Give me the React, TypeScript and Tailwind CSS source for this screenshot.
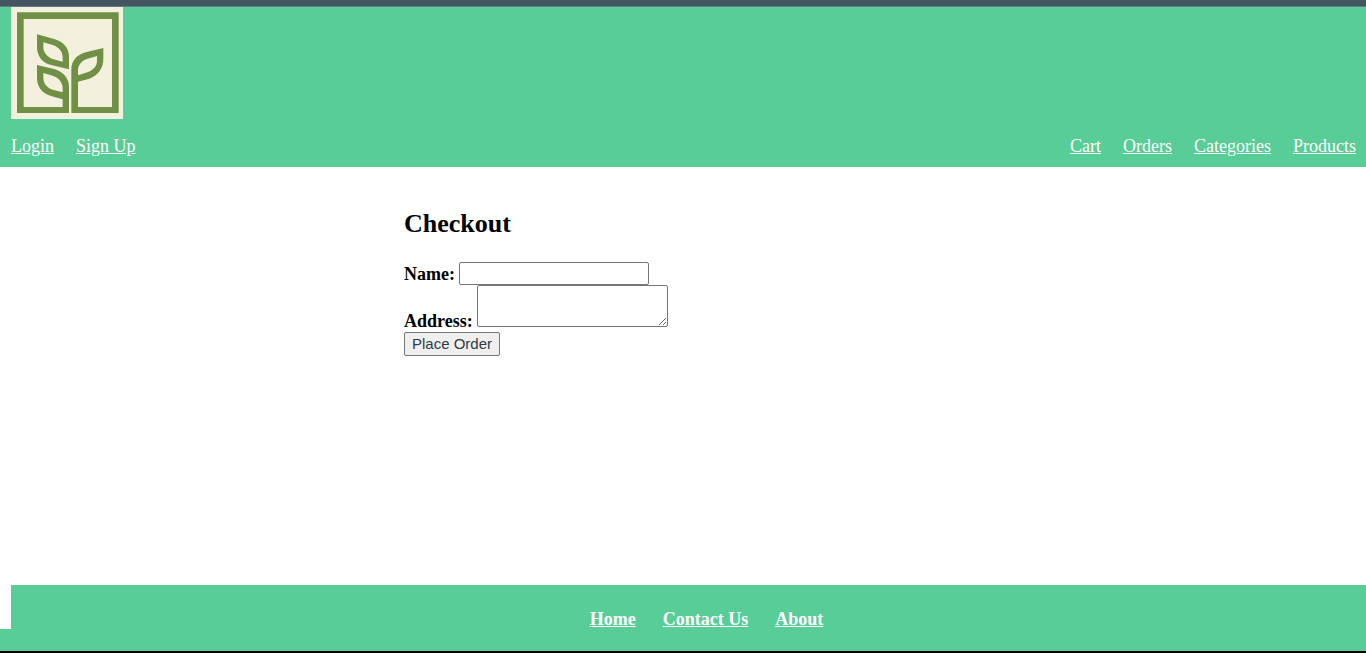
const link = "text-white underline";

function Logo() {
  return (
    <svg viewBox="33 21 336 336" className="block size-28" role="img" aria-label="Plant shop logo">
      <rect x="33" y="21" width="336" height="336" fill="#f4f0de" />
      <g fill="#6f9045" fillRule="evenodd">
        <path d="M51 37H356V339H214V208C214 182 232 164 257 157L310 144V178C310 205 294 227 268 236L234 245V321H336V57H71V321H188V298L153 288C126 280 111 260 111 234V195L165 208C190 216 207 235 207 260V339H51ZM130 219V234C130 251 142 264 158 269L188 277V265C188 246 174 232 158 227ZM291 168L263 176C245 182 234 194 234 211V226L262 217C280 210 291 198 291 182Z" />
        <path d="M111 103L165 118C190 126 207 144 207 170V208L153 195C126 188 111 168 111 141ZM130 127V141C130 158 142 171 158 177L188 185V172C188 154 176 141 158 135Z" />
      </g>
    </svg>
  );
}

export default function App() {
  return (
    <div className="flex min-h-screen flex-col border-b-2 border-black bg-white font-['Liberation_Serif',serif] text-lg leading-5 text-black">
      <div className="h-[7px] border-b border-[#6b7780] bg-[#445661]" />
      <header className="bg-[#58cd98] pr-[10px] pb-[11px] pl-[11px]">
        <a href="#" className="inline-block align-top">
          <Logo />
        </a>
        <nav className="flex justify-between pt-[17px]">
          <div className="flex gap-[22px]">
            <a href="#" className={link}>Login</a>
            <a href="#" className={link}>Sign Up</a>
          </div>
          <div className="flex gap-[22px]">
            <a href="#" className={link}>Cart</a>
            <a href="#" className={link}>Orders</a>
            <a href="#" className={link}>Categories</a>
            <a href="#" className={link}>Products</a>
          </div>
        </nav>
      </header>
      <main className="mx-auto w-full max-w-[558px] grow pt-10">
        <h2 className="mb-[22px] text-[26px] leading-[33px] font-bold">Checkout</h2>
        <form onSubmit={(e) => e.preventDefault()}>
          <div className="flex items-center gap-1">
            <label htmlFor="name" className="font-bold">Name:</label>
            <input id="name" type="text" className="h-[23px] w-[190px] rounded-xs border border-[#767676] bg-white px-1 font-['Liberation_Sans',sans-serif] text-[15px]" />
          </div>
          <div className="flex items-end gap-1">
            <label htmlFor="address" className="-mb-1 font-bold">Address:</label>
            <textarea id="address" rows={2} className="h-[42px] w-[191px] resize rounded-xs border border-[#767676] bg-white px-1 font-['Liberation_Mono',monospace] text-[15px]" />
          </div>
          <button type="submit" className="mt-[5px] h-6 rounded-xs border border-[#767676] bg-[#efefef] px-[7px] font-['Liberation_Sans',sans-serif] text-[15px] leading-5 text-[#303a45]">
            Place Order
          </button>
        </form>
      </main>
      <footer className="border-b-[22px] border-[#58cd98]">
        <nav className="ml-[11px] flex h-11 items-end justify-center gap-[27px] bg-[#58cd98] pl-9 font-bold">
          <a href="#" className={link}>Home</a>
          <a href="#" className={link}>Contact Us</a>
          <a href="#" className={link}>About</a>
        </nav>
      </footer>
    </div>
  );
}
